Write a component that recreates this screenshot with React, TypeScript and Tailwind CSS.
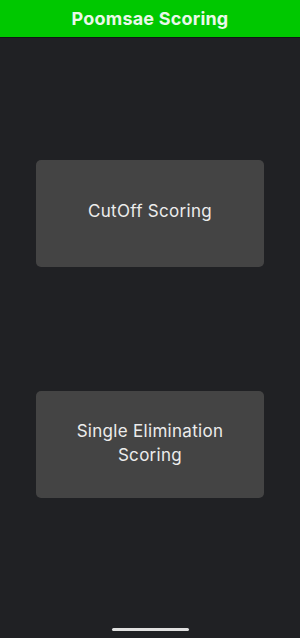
export default function App() {
  return (
    <div className="flex h-[638px] w-full flex-col bg-[#202124] font-['Inter',sans-serif]">
      {/* Header */}
      <div className="flex h-[38px] items-center justify-center border-b border-[#151515] bg-[#00c800]">
        <h1 className="text-[18px] font-bold tracking-[0.2px] text-[#eaf8ea]">Poomsae Scoring</h1>
      </div>

      <div className="flex flex-1 flex-col items-center pt-[122px]">
        <button className="flex h-[107px] w-[228px] items-center justify-center rounded-[5px] bg-[#444444] pb-[3px] text-[17px] tracking-[0.3px] text-[#ececec]">
          CutOff Scoring
        </button>
        <button className="mt-[124px] flex h-[107px] w-[228px] items-center justify-center rounded-[5px] bg-[#444444] px-5 pb-[3px] text-center text-[17px] leading-[24px] tracking-[0.3px] text-[#ececec]">
          Single Elimination Scoring
        </button>
      </div>

      {/* Home indicator */}
      <div className="flex justify-center pb-[7px]">
        <div className="h-[3px] w-[77px] rounded-full bg-[#e0e0e0]" />
      </div>
    </div>
  );
}
